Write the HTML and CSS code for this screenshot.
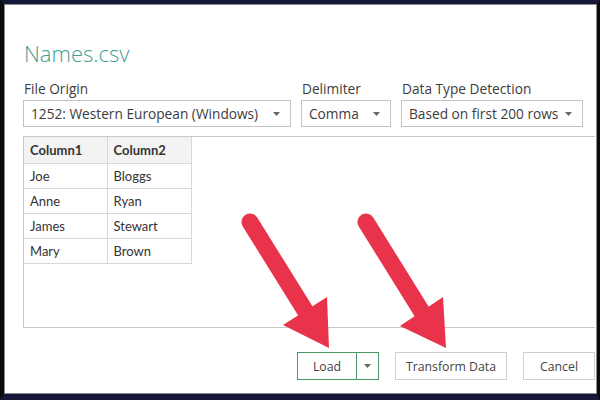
FILE: index.html
```html
<!DOCTYPE html>
<html>
<head>
<meta charset="utf-8">
<link rel="stylesheet" href="styles.css">
</head>
<body>
<div class="frame">
  <div class="dialog">
    <div class="title">Names.csv</div>
    <div class="options">
      <div class="field">
        <div class="label">File Origin</div>
        <div class="select w-origin"><span>1252: Western European (Windows)</span><svg class="caret" width="7" height="4" viewBox="0 0 7 4"><path d="M0 0H7L3.5 4Z"/></svg></div>
      </div>
      <div class="field">
        <div class="label">Delimiter</div>
        <div class="select w-delim"><span>Comma</span><svg class="caret" width="7" height="4" viewBox="0 0 7 4"><path d="M0 0H7L3.5 4Z"/></svg></div>
      </div>
      <div class="field">
        <div class="label">Data Type Detection</div>
        <div class="select w-detect"><span>Based on first 200 rows</span><svg class="caret" width="7" height="4" viewBox="0 0 7 4"><path d="M0 0H7L3.5 4Z"/></svg></div>
      </div>
    </div>
    <div class="preview">
      <table class="grid">
        <thead>
          <tr><th>Column1</th><th>Column2</th></tr>
        </thead>
        <tbody>
          <tr><td>Joe</td><td>Bloggs</td></tr>
          <tr><td>Anne</td><td>Ryan</td></tr>
          <tr><td>James</td><td>Stewart</td></tr>
          <tr><td>Mary</td><td>Brown</td></tr>
        </tbody>
      </table>
    </div>
    <div class="actions">
      <div class="split">
        <div class="btn-main">Load</div>
        <div class="btn-drop"><svg class="caret" width="7" height="4" viewBox="0 0 7 4"><path d="M0 0H7L3.5 4Z"/></svg></div>
      </div>
      <div class="btn w-transform">Transform Data</div>
      <div class="btn w-cancel">Cancel</div>
    </div>
  </div>
</div>
<svg class="arrows" width="600" height="400" viewBox="0 0 600 400">
  <g fill="#e8334a" stroke="#e8334a">
    <line x1="250" y1="222" x2="306" y2="312" stroke-width="17" stroke-linecap="round"/>
    <polygon points="283,325 327,297 329,348" stroke="none"/>
    <line x1="366" y1="222" x2="422" y2="312" stroke-width="17" stroke-linecap="round"/>
    <polygon points="400,326 443,297 446,348" stroke="none"/>
  </g>
</svg>
</body>
</html>
```
FILE: styles.css
```css
* { box-sizing: border-box; }
html, body { margin: 0; padding: 0; }
body {
  width: 600px;
  height: 400px;
  position: relative;
  overflow: hidden;
  background: #16163a;
  font-family: "Open Sans", "Liberation Sans", sans-serif;
}
.frame {
  width: 600px;
  height: 400px;
  border-top: 4px solid #17173b;
  border-bottom: 6px solid #17173b;
  border-left: 4px solid #0b0b0d;
  border-right: 3px solid #0b0b0d;
  background: #0b0b0d;
}
.dialog {
  height: 100%;
  background: #ffffff;
  border: 1px solid #8a8a8a;
  padding: 34px 1px 0 18px;
  display: flex;
  flex-direction: column;
}
.title {
  font-size: 22px;
  font-weight: 300;
  line-height: 28px;
  color: #3f9d93;
  padding-left: 1px;
}
.options {
  display: flex;
  gap: 10px;
  margin-top: 13px;
}
.field { display: flex; flex-direction: column; }
.label {
  font-size: 13.7px;
  line-height: 18px;
  color: #3c3c3c;
  padding-left: 1px;
  margin-bottom: 2px;
}
.select {
  height: 27px;
  border: 1px solid #c3c3c3;
  display: flex;
  align-items: center;
  justify-content: space-between;
  padding: 0 10px 0 7px;
  font-size: 13.7px;
  color: #3c3c3c;
}
.caret { fill: #666666; display: block; }
.w-origin { width: 268px; }
.w-delim { width: 90px; }
.w-detect { width: 182px; }
.preview {
  margin-top: 9px;
  height: 192px;
  border: 1px solid #c8c8c8;
  border-right: none;
}
.grid {
  border-collapse: collapse;
  font-family: Lato, "Open Sans", sans-serif;
  font-size: 13px;
  color: #333333;
}
.grid th, .grid td {
  width: 84px;
  height: 25px;
  padding: 0 0 0 6px;
  text-align: left;
  border-right: 1px solid #d8d8d8;
  border-bottom: 1px solid #d8d8d8;
}
.grid th {
  height: 26px;
  background: #f3f3f3;
  font-weight: 700;
}
.grid th:first-child, .grid td:first-child { width: 83px; }
.actions {
  display: flex;
  justify-content: flex-end;
  gap: 16px;
  margin-top: 24px;
  font-size: 12.3px;
  color: #444444;
}
.split {
  display: flex;
  width: 82px;
  height: 28px;
  border: 1px solid #4b9566;
}
.btn-main {
  width: 59px;
  border-right: 1px solid #4b9566;
  display: flex;
  align-items: center;
  justify-content: center;
}
.btn-drop {
  flex: 1;
  display: flex;
  align-items: center;
  justify-content: center;
}
.btn {
  height: 28px;
  border: 1px solid #cfcfcf;
  display: flex;
  align-items: center;
  justify-content: center;
}
.w-transform { width: 112px; }
.w-cancel { width: 72px; }
.arrows {
  position: absolute;
  left: 0;
  top: 0;
  pointer-events: none;
}
```
